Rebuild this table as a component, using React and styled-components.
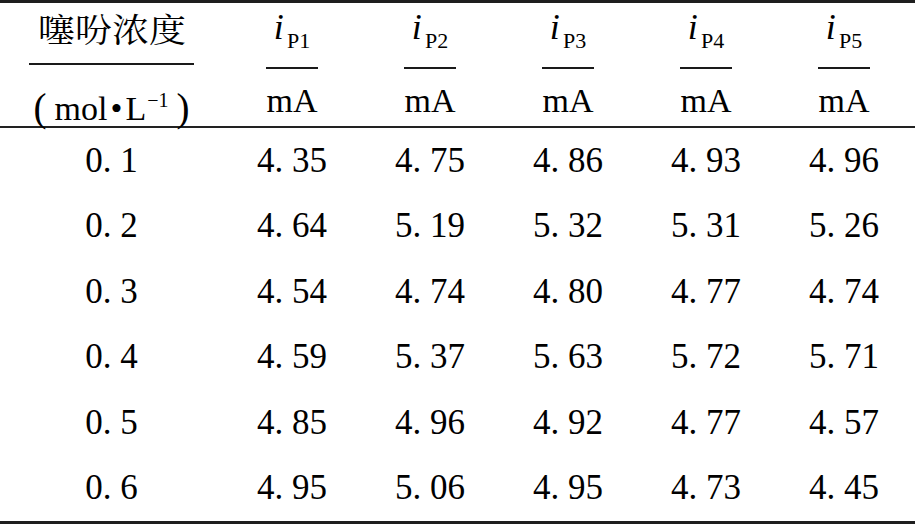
import React from 'react';
import styled, { createGlobalStyle } from 'styled-components';

const Global = createGlobalStyle`
  html, body { margin: 0; padding: 0; background: #fff; overflow: hidden; }
`;

const SERIF = `"Liberation Serif", "Times New Roman", "DejaVu Serif", serif`;
const COLS = '223px repeat(5, 138px)';

const Table = styled.div`
  width: 915px;
  font-family: ${SERIF};
  color: #000;
  border-top: 3px solid #1e1e1e;
  border-bottom: 5px solid #1e1e1e;
`;

const Head = styled.div`
  display: grid;
  grid-template-columns: ${COLS};
  height: 123px;
  border-bottom: 2px solid #222;
`;

const HeadCell = styled.div`
  display: flex;
  flex-direction: column;
  align-items: center;
`;

const CjkTitle = styled.div`
  font-family: "Noto Serif CJK SC", "Noto Sans CJK SC", serif;
  font-size: 33px;
  line-height: 40px;
  height: 40px;
  margin-top: 5px;
  transform: scaleX(1.12);
`;

const Symbol = styled.div`
  font-size: 34px;
  line-height: 40px;
  height: 40px;
  margin-top: 3.5px;
  white-space: nowrap;
`;

const Italic = styled.span`
  font-style: italic;
  font-size: 36px;
`;

const Sub = styled.span`
  font-size: 22px;
  vertical-align: -9px;
  margin-left: 3px;
`;

const Rule = styled.div`
  width: ${(p) => p.$w}px;
  height: 2px;
  background: #1a1a1a;
  margin-top: ${(p) => p.$mt}px;
`;

const Unit = styled.div`
  font-size: 34px;
  line-height: 40px;
  height: 40px;
  margin-top: ${(p) => p.$mt}px;
  white-space: nowrap;
`;

const Sup = styled.span`
  font-size: 20px;
  vertical-align: 13px;
  margin-left: 1px;
`;

const Dot = styled.span`
  margin: 0 3px;
`;

const Paren = styled.span`
  font-size: 39px;
  line-height: 40px;
  vertical-align: -1px;
  margin-right: ${(p) => (p.$left ? '8px' : '0')};
  margin-left: ${(p) => (p.$left ? '0' : '8px')};
`;

const Row = styled.div`
  display: grid;
  grid-template-columns: ${COLS};
  height: 65.5px;
  align-items: center;
  font-size: 35px;
`;

const Cell = styled.div`
  text-align: center;
  white-space: pre;
`;

const data = [
  ['0. 1', '4. 35', '4. 75', '4. 86', '4. 93', '4. 96'],
  ['0. 2', '4. 64', '5. 19', '5. 32', '5. 31', '5. 26'],
  ['0. 3', '4. 54', '4. 74', '4. 80', '4. 77', '4. 74'],
  ['0. 4', '4. 59', '5. 37', '5. 63', '5. 72', '5. 71'],
  ['0. 5', '4. 85', '4. 96', '4. 92', '4. 77', '4. 57'],
  ['0. 6', '4. 95', '5. 06', '4. 95', '4. 73', '4. 45'],
];

export default function App() {
  return (
    <>
      <Global />
      <Table>
        <Head>
          <HeadCell>
            <CjkTitle>噻吩浓度</CjkTitle>
            <Rule $w={165} $mt={15} />
            <Unit $mt={15}>
              <Paren $left>(</Paren>mol<Dot>•</Dot>L<Sup>−1</Sup>
              <Paren>)</Paren>
            </Unit>
          </HeadCell>
          {[1, 2, 3, 4, 5].map((n) => (
            <HeadCell key={n}>
              <Symbol>
                <Italic>i</Italic>
                <Sub>P{n}</Sub>
              </Symbol>
              <Rule $w={52} $mt={20.5} />
              <Unit $mt={11.5}>mA</Unit>
            </HeadCell>
          ))}
        </Head>
        {data.map((r, i) => (
          <Row key={i}>
            {r.map((v, j) => (
              <Cell key={j}>{v}</Cell>
            ))}
          </Row>
        ))}
      </Table>
    </>
  );
}
